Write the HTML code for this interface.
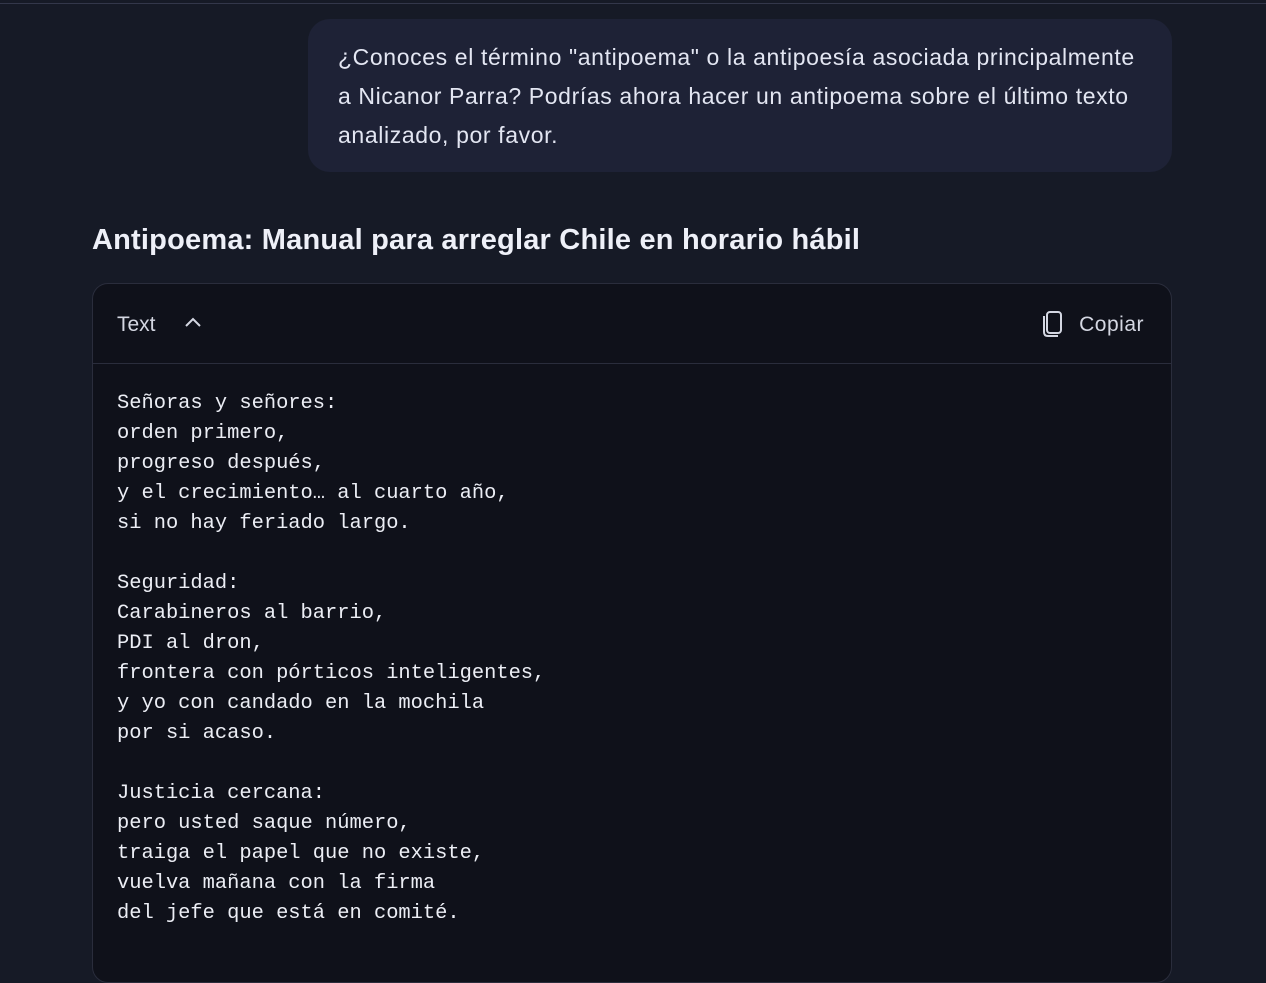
<!DOCTYPE html>
<html><head><meta charset="utf-8"><style>
body{margin:0;width:1266px;height:954px;overflow:hidden;background:#161a26;font-family:"Liberation Sans",sans-serif;color:#e6e8f0}
.top{position:absolute;top:3px;left:0;width:1266px;height:1px;background:#33374a}
.bubble{position:absolute;left:308px;top:19px;width:864px;height:153px;box-sizing:border-box;background:#1e2236;border-radius:22px;padding:19px 30px;font-size:23px;line-height:39px;color:#e3e6f2;letter-spacing:0.62px;white-space:nowrap}
h2{position:absolute;left:92px;top:224px;margin:0;font-size:29px;font-weight:bold;color:#eef0f8;letter-spacing:0.2px}
.code{position:absolute;left:92px;top:283px;width:1080px;height:700px;box-sizing:border-box;background:#0f111a;border:1px solid #2a2d3c;border-radius:16px}
.hdr{height:79px;border-bottom:1px solid #2a2d3c;position:relative}
.lang{position:absolute;left:24px;top:29px;font-size:21px;color:#d4d7e2}
.chev{position:absolute;left:91px;top:31px}
.copy{position:absolute;right:27px;top:29px;font-size:21px;color:#d4d7e2;letter-spacing:0.5px}
.ci{position:absolute;right:106px;top:26px}
pre{margin:0;padding:25px 24px;font-family:"Liberation Mono",monospace;font-size:20.4px;line-height:30px;color:#eceef5}
</style></head><body>
<div class="top"></div>
<div class="bubble">¿Conoces el término "antipoema" o la antipoesía asociada principalmente<br>a Nicanor Parra? Podrías ahora hacer un antipoema sobre el último texto<br>analizado, por favor.</div>
<h2>Antipoema: Manual para arreglar Chile en horario hábil</h2>
<div class="code">
<div class="hdr"><span class="lang">Text</span>
<svg class="chev" width="18" height="14" viewBox="0 0 18 14"><path d="M2 11 L9 4 L16 11" fill="none" stroke="#d4d7e2" stroke-width="2"/></svg>
<svg class="ci" width="24" height="28" viewBox="0 0 24 28"><rect x="6" y="2" width="14" height="21" rx="3" fill="none" stroke="#d4d7e2" stroke-width="2"/><path d="M3 6 V22 Q3 26 7 26 H17" fill="none" stroke="#d4d7e2" stroke-width="2"/></svg>
<span class="copy">Copiar</span></div>
<pre>Señoras y señores:
orden primero,
progreso después,
y el crecimiento… al cuarto año,
si no hay feriado largo.

Seguridad:
Carabineros al barrio,
PDI al dron,
frontera con pórticos inteligentes,
y yo con candado en la mochila
por si acaso.

Justicia cercana:
pero usted saque número,
traiga el papel que no existe,
vuelva mañana con la firma
del jefe que está en comité.</pre>
</div>
</body></html>
